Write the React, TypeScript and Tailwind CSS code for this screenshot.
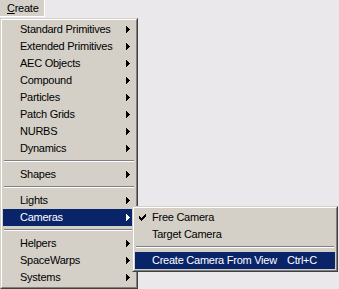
import React from 'react';

type Entry = { label: string; sub?: boolean; active?: boolean } | 'sep';

const createMenu: Entry[] = [
  { label: 'Standard Primitives', sub: true },
  { label: 'Extended Primitives', sub: true },
  { label: 'AEC Objects', sub: true },
  { label: 'Compound', sub: true },
  { label: 'Particles', sub: true },
  { label: 'Patch Grids', sub: true },
  { label: 'NURBS', sub: true },
  { label: 'Dynamics', sub: true },
  'sep',
  { label: 'Shapes', sub: true },
  'sep',
  { label: 'Lights', sub: true },
  { label: 'Cameras', sub: true, active: true },
  'sep',
  { label: 'Helpers', sub: true },
  { label: 'SpaceWarps', sub: true },
  { label: 'Systems', sub: true },
];

const font = { fontFamily: '"Liberation Sans", Arial, sans-serif' };

function Arrow({ white }: { white?: boolean }) {
  return (
    <svg width="4" height="7" viewBox="0 0 4 7" shapeRendering="crispEdges" className="ml-auto mr-[5px]">
      <path d="M0 0h1v7H0zM1 1h1v5H1zM2 2h1v3H2zM3 3h1v1H3z" fill={white ? '#fff' : '#000'} />
    </svg>
  );
}

function Check() {
  return (
    <svg width="7" height="7" viewBox="0 0 7 7" shapeRendering="crispEdges" className="absolute left-[4px] top-[5px]">
      <path d="M6 0h1v1H6zM5 1h2v1H5zM0 2h1v1H0zM4 2h3v1H4zM0 3h2v1H0zM3 3h3v1H3zM0 4h5v1H0zM1 5h3v1H1zM2 6h1v1H2z" fill="#000" />
    </svg>
  );
}

function Separator() {
  return (
    <div className="h-[9px] pt-[3px] px-px">
      <div className="h-[2px] border-t border-t-[#808080] border-b border-b-white" />
    </div>
  );
}

// classic raised 3D frame: light/white top-left, grey/dark bottom-right
function Frame({ className, children }: { className: string; children: React.ReactNode }) {
  return (
    <div className={`border border-t-[#d4d0c8] border-l-[#d4d0c8] border-r-[#404040] border-b-[#404040] bg-[#d4d0c8] ${className}`}>
      <div className="border border-t-white border-l-white border-r-[#808080] border-b-[#808080] p-px">{children}</div>
    </div>
  );
}

export default function App() {
  return (
    <div className="relative w-[339px] h-[289px] overflow-hidden bg-[#ebe8ec] text-[11px] tracking-[-0.25px] text-black" style={font}>
      {/* menu bar */}
      <div className="h-[18px]">
        <div className="w-[45px] h-[17px] bg-[#d4d0c8] border-r border-b border-white pl-[7px] leading-[17px]">
          <span className="underline underline-offset-1">C</span>reate
        </div>
      </div>

      <Frame className="w-[138px]">
        {createMenu.map((e, i) =>
          e === 'sep' ? (
            <Separator key={i} />
          ) : (
            <div
              key={i}
              className={`flex items-center h-[17px] pl-[17px] leading-[17px] ${e.active ? 'bg-[#0a246a] text-white' : ''}`}
            >
              <span>{e.label}</span>
              {e.sub && <Arrow white={e.active} />}
            </div>
          )
        )}
      </Frame>

      {/* Cameras submenu */}
      <Frame className="absolute left-[132px] top-[206px] w-[206px]">
        <div className="relative flex items-center h-[17px] pl-[17px] leading-[17px]">
          <Check />
          <span>Free Camera</span>
        </div>
        <div className="flex items-center h-[17px] pl-[17px] leading-[17px]">
          <span>Target Camera</span>
        </div>
        <Separator />
        <div className="flex items-center h-[17px] pl-[17px] pr-[18px] leading-[17px] bg-[#0a246a] text-white">
          <span>Create Camera From View</span>
          <span className="ml-auto">Ctrl+C</span>
        </div>
      </Frame>
    </div>
  );
}
